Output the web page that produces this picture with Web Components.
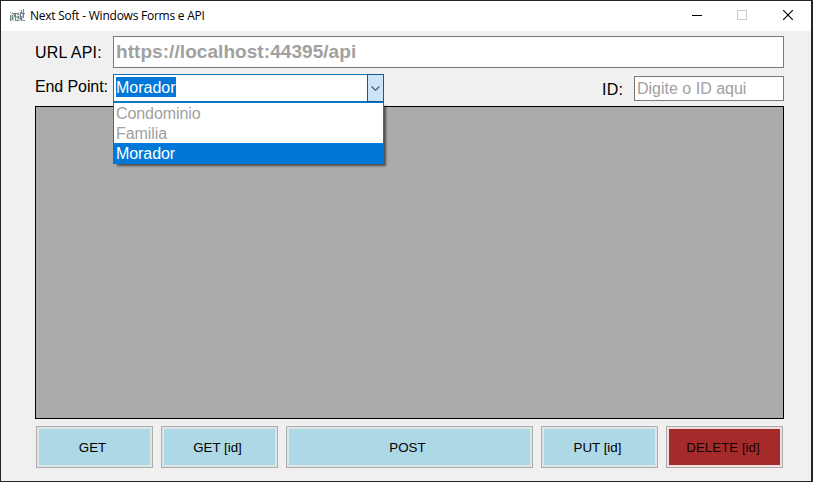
<!DOCTYPE html>
<html lang="pt-BR">
<head>
<meta charset="utf-8">
<title>Next Soft - Windows Forms e API</title>
<style>
html,body{margin:0;height:100%;overflow:hidden;background:#242326}
body{font-family:"Liberation Sans",Arial,sans-serif;font-size:16px;color:#000}
</style>
</head>
<body>
<app-window></app-window>
<script>
const define = (name, html) => customElements.define(name, class extends HTMLElement {
  constructor() {
    super();
    const t = document.createElement('template');
    t.innerHTML = html;
    this.attachShadow({ mode: 'open' }).append(t.content.cloneNode(true));
  }
});

define('title-bar', `
<style>
:host{display:flex;height:30px;background:#fff;align-items:center;box-sizing:border-box;padding-left:8px;font:12px/16px "Open Sans","Noto Sans",sans-serif}
svg{display:block;flex:none}
.t{margin-left:5px;letter-spacing:-.24px;white-space:nowrap;flex:1}
</style>
<svg width="16" height="16" viewBox="0 0 16 16" fill="none" stroke="#73868a" stroke-width="1">
<path stroke="#c3cccd" d="M2.500 5v8M4.500 6v7M8.500 5v8M10.500 6v7M13.500 4v9"/>
<path d="M1.500 4v1M1.500 7v6M3.500 5v1M3.500 7v5M4 5.500h2M5.500 6v3M6.500 5v8M7 5.500h2M7 9h3M7 12.500h3M9.500 5v2M9.500 8v3M11.500 4v8M12.500 2v4M12.500 8v5M12 5.500h4M14.500 1v9M14 12.500h2"/>
</svg>
<span class="t"><slot></slot></span>
<svg width="138" height="30" viewBox="0 0 138 30" fill="none" shape-rendering="crispEdges">
<path stroke="#000" d="M19 14.500h10"/>
<path stroke="#ccc" d="M64.500 9.500h9v9h-9z"/>
<path stroke="#000" shape-rendering="auto" stroke-width="1.150" d="M110.200 9.200l9.600 9.600M119.800 9.200l-9.600 9.600"/>
</svg>`);

define('text-field', `
<style>
:host{display:block;box-sizing:border-box;border:1px solid #7a7a7a;background:#fff;color:#a0a0a0;padding-left:2px;white-space:nowrap}
</style><slot></slot>`);

define('combo-item', `
<style>
:host{display:block;height:20px;line-height:22px;padding-left:2px;color:#a0a0a0;letter-spacing:-.08px}
:host([selected]){background:#0078d7;color:#fff}
</style><slot></slot>`);

define('combo-box', `
<style>
:host{display:block;position:relative;width:271px;height:28px}
.box{display:flex;box-sizing:border-box;height:28px;border:1px solid #1874b0;background:#fff}
.v{flex:1;padding:2px 0 0 2px}
.v span{display:inline-block;height:20px;line-height:21px;background:#0078d7;color:#fff}
.b{box-sizing:border-box;width:17px;margin:-1px;border:1px solid #105b94;background:#cce4f7;display:flex;align-items:center;justify-content:center}
.list{position:absolute;z-index:2;left:0;top:28px;width:271px;box-sizing:border-box;border:1px solid #0078d7;background:#fff;box-shadow:3px 3px 2px -1px rgba(0,0,0,.55)}
</style>
<div class="box"><div class="v"><span><slot name="value"></slot></span></div>
<div class="b"><svg width="9" height="6" viewBox="0 0 9 6" fill="none" stroke="#404a54" stroke-width="1.100"><path d="M.6 1.500l3.900 3.800L8.400 1.500"/></svg></div></div>
<div class="list"><slot></slot></div>`);

define('data-grid', `
<style>:host{display:block;box-sizing:border-box;height:313px;border:1px solid #000;background:#ababab}</style>`);

define('form-button', `
<style>
:host{display:flex;box-sizing:border-box;height:42px;border:1px solid #adadad;padding:2px;background:#dfe5e7;font-size:13.330px}
div{flex:1;background:#add8e6;display:flex;align-items:center;justify-content:center;white-space:nowrap;padding-right:4px}
:host([danger]){background:#f0dcdc}
:host([danger]) div{background:#a52a2a;color:#160404;padding-right:3px}
</style><div><slot></slot></div>`);

define('app-window', `
<style>
:host{display:block;box-sizing:border-box;width:813px;height:482px;padding:1px 2px 1px 1px;background:#242326}
.client{box-sizing:border-box;height:450px;background:#f0f0f0;padding:5px 27px 0 34px;display:flex;flex-direction:column}
.row{display:flex}
.row>label{white-space:nowrap}
.url{height:38px}
.url label{width:78px;line-height:33px;letter-spacing:.2px}
.url text-field{flex:1;height:32px;font-weight:bold;font-size:19px;line-height:30px;letter-spacing:.06px}
.ep{height:32px}
.ep label{width:78px;line-height:25px;letter-spacing:-.1px}
.ep .id{width:32px;margin-left:auto;line-height:31px;letter-spacing:.2px}
.ep text-field{width:150px;height:25px;margin-top:2px;line-height:23px}
.btns{display:grid;grid-template-columns:117px 117px 247px 117px 117px;gap:8px;padding:7px 1px 0}
</style>
<title-bar>Next Soft - Windows Forms e API</title-bar>
<div class="client">
<div class="row url"><label>URL API:</label><text-field>https://localhost:44395/api</text-field></div>
<div class="row ep"><label>End Point:</label>
<combo-box><span slot="value">Morador</span><combo-item>Condominio</combo-item><combo-item>Familia</combo-item><combo-item selected>Morador</combo-item></combo-box>
<label class="id">ID:</label><text-field>Digite o ID aqui</text-field></div>
<data-grid></data-grid>
<div class="btns"><form-button>GET</form-button><form-button>GET [id]</form-button><form-button>POST</form-button><form-button>PUT [id]</form-button><form-button danger>DELETE [id]</form-button></div>
</div>`);
</script>
</body>
</html>
